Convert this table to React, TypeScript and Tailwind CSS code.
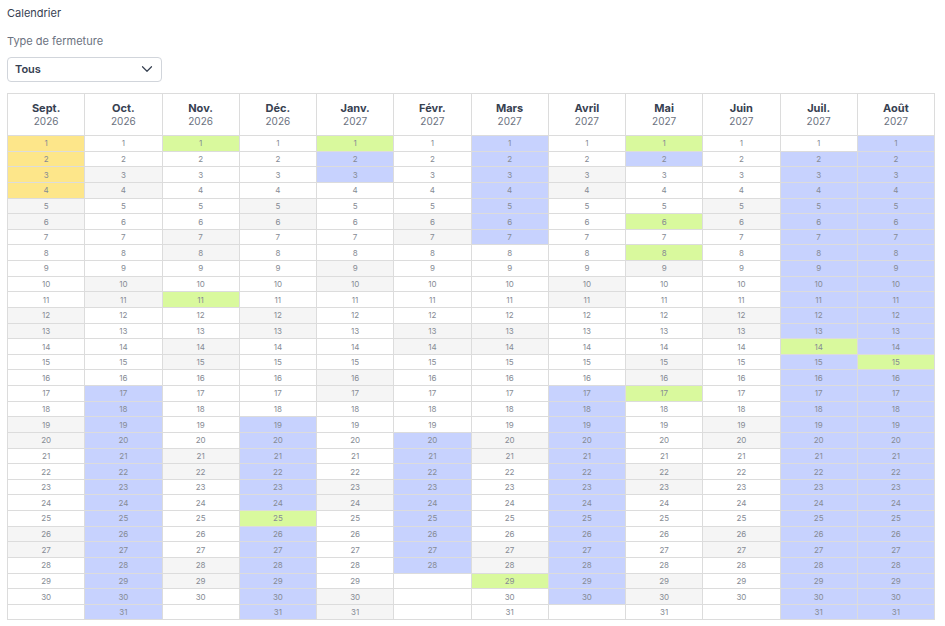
import { ChevronDown } from 'lucide-react'

type Month = { label: string; year: number; month: number }

const MONTHS: Month[] = [
  { label: 'Sept.', year: 2026, month: 9 },
  { label: 'Oct.', year: 2026, month: 10 },
  { label: 'Nov.', year: 2026, month: 11 },
  { label: 'Déc.', year: 2026, month: 12 },
  { label: 'Janv.', year: 2027, month: 1 },
  { label: 'Févr.', year: 2027, month: 2 },
  { label: 'Mars', year: 2027, month: 3 },
  { label: 'Avril', year: 2027, month: 4 },
  { label: 'Mai', year: 2027, month: 5 },
  { label: 'Juin', year: 2027, month: 6 },
  { label: 'Juil.', year: 2027, month: 7 },
  { label: 'Août', year: 2027, month: 8 },
]

// jours fériés
const HOLIDAYS = new Set([
  '2026-11-1', '2026-11-11', '2026-12-25', '2027-1-1', '2027-3-29',
  '2027-5-1', '2027-5-6', '2027-5-8', '2027-5-17', '2027-7-14', '2027-8-15',
])

// vacances scolaires
const SCHOOL: [string, string][] = [
  ['2026-10-17', '2026-11-01'],
  ['2026-12-19', '2027-01-03'],
  ['2027-02-20', '2027-03-07'],
  ['2027-04-17', '2027-05-02'],
  ['2027-07-02', '2027-08-31'],
]

const CLOSURE: [string, string][] = [['2026-09-01', '2026-09-04']]

function iso(y: number, m: number, d: number) {
  return `${y}-${String(m).padStart(2, '0')}-${String(d).padStart(2, '0')}`
}

function inRanges(key: string, ranges: [string, string][]) {
  return ranges.some(([a, b]) => key >= a && key <= b)
}

function cellClass(m: Month, day: number) {
  const days = new Date(m.year, m.month, 0).getDate()
  if (day > days) return 'bg-white'
  if (HOLIDAYS.has(`${m.year}-${m.month}-${day}`)) return 'bg-[#d9f99d]'
  const key = iso(m.year, m.month, day)
  if (inRanges(key, CLOSURE)) return 'bg-[#fde68a]'
  if (inRanges(key, SCHOOL)) return 'bg-[#c7d2fe]'
  const wd = new Date(m.year, m.month - 1, day).getDay()
  if (wd === 0 || wd === 6) return 'bg-[#f5f5f5]'
  return 'bg-white'
}

export default function App() {
  const rows = Array.from({ length: 31 }, (_, i) => i + 1)

  return (
    <div className="min-h-screen bg-white pt-[6px] pl-[7px] font-['Inter',sans-serif] text-[#374151]">
      <p className="text-[11px] leading-[15px]">Calendrier</p>
      <p className="mt-[13px] text-[11px] leading-[15px] text-[#6b7280]">Type de fermeture</p>

      <div className="mt-[7.5px] flex h-[25px] w-[155px] items-center justify-between rounded-[4px] border border-[#d1d5db] pl-[7px] pr-[5px]">
        <span className="text-[11px] font-semibold">Tous</span>
        <ChevronDown size={18} strokeWidth={1.6} className="text-[#374151]" />
      </div>

      <div className="mt-[11.6px] grid w-[928px] grid-cols-12 border-l border-t border-[#dcdcdc]">
        {MONTHS.map((m) => (
          <div
            key={m.label}
            className="flex h-[42px] flex-col items-center justify-center border-b border-r border-[#dcdcdc]"
          >
            <span className="text-[11px] font-bold leading-[14px] text-[#374151]">{m.label}</span>
            <span className="text-[10px] leading-[13px] text-[#6b7280]">{m.year}</span>
          </div>
        ))}
        {rows.map((day) =>
          MONTHS.map((m) => {
            const days = new Date(m.year, m.month, 0).getDate()
            return (
              <div
                key={`${m.label}-${day}`}
                className={`flex h-[15.63px] items-center justify-center border-b border-r border-[#dcdcdc] text-[8px] text-[#868b94] ${cellClass(m, day)}`}
              >
                {day <= days ? day : ''}
              </div>
            )
          })
        )}
      </div>
    </div>
  )
}
